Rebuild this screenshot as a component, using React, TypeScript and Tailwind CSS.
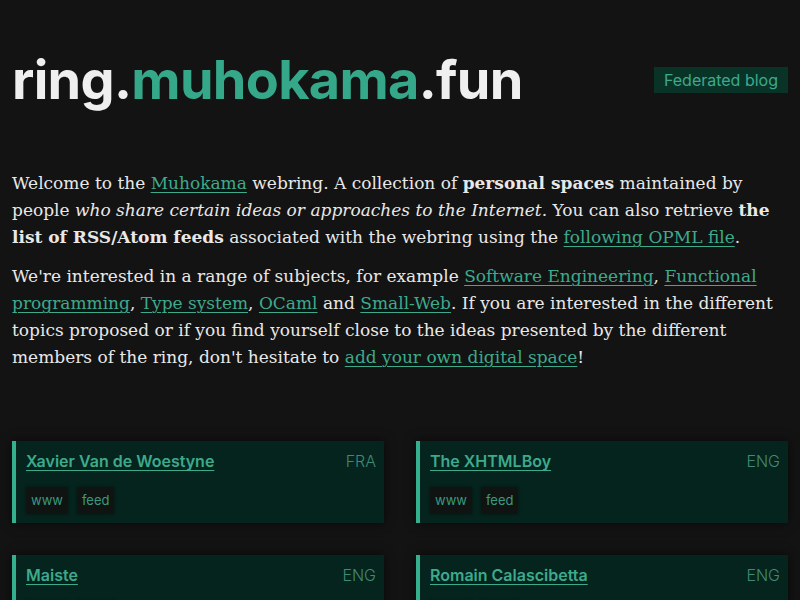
import React from "react";

const members = [
  { name: "Xavier Van de Woestyne", lang: "FRA", tags: ["www", "feed"] },
  { name: "The XHTMLBoy", lang: "ENG", tags: ["www", "feed"] },
  { name: "Maiste", lang: "ENG", tags: ["www", "feed"] },
  { name: "Romain Calascibetta", lang: "ENG", tags: ["www", "feed"] },
];

function L({ children }: { children: React.ReactNode }) {
  return <a className="text-[#3daa8c] underline underline-offset-[3px] decoration-1">{children}</a>;
}

export default function App() {
  return (
    <div className="min-h-[600px] bg-[#131313] text-[#e8e8e8] px-3 pb-10">
      <header className="flex items-center justify-between pt-[48px] h-[112px]">
        <h1 className="text-[54px] leading-none font-bold tracking-[-0.7px] text-[#efefef] font-['Inter',sans-serif]">
          ring.<span className="text-[#35a88a]">muhokama</span>.fun
        </h1>
        <span className="bg-[#0a3328] text-[#3daa8c] px-[10px] h-[26px] flex items-center text-[16px] font-['Inter',sans-serif]">
          Federated blog
        </span>
      </header>
      <main className="mt-[58px] font-['DejaVu_Serif',serif] text-[17px] leading-[27px]">
        <p>
          Welcome to the <L>Muhokama</L> webring. A collection of <b>personal spaces</b> maintained by people{" "}
          <i>who share certain ideas or approaches to the Internet</i>. You can also retrieve{" "}
          <b>the list of RSS/Atom feeds</b> associated with the webring using the <L>following OPML file</L>.
        </p>
        <p className="mt-3">
          We're interested in a range of subjects, for example <L>Software Engineering</L>,{" "}
          <L>Functional programming</L>, <L>Type system</L>, <L>OCaml</L> and <L>Small-Web</L>. If you are
          interested in the different topics proposed or if you find yourself close to the ideas presented by the
          different members of the ring, don't hesitate to <L>add your own digital space</L>!
        </p>
      </main>
      <section className="mt-[70px] grid grid-cols-2 gap-x-8 gap-y-8 font-['Inter',sans-serif]">
        {members.map((m) => (
          <div
            key={m.name}
            className="bg-[#05241d] border-l-4 border-[#35b08f] pl-[10px] pr-[8px] pt-[8px] pb-[8px] shadow-[0_0_10px_rgba(0,0,0,0.6)] h-[82px]"
          >
            <div className="flex items-center justify-between">
              <a className="text-[16px] font-semibold text-[#3daa8c] underline underline-offset-[3px]">{m.name}</a>
              <span className="text-[16px] font-light text-[#3f8a75]">{m.lang}</span>
            </div>
            <div className="flex gap-[9px] mt-[14px]">
              {m.tags.map((t) => (
                <span key={t} className="bg-[#0f1311] text-[#3a9a80] text-[13px] px-[5px] h-[27px] flex items-center shadow-[0_0_3px_rgba(0,0,0,0.5)]">
                  {t}
                </span>
              ))}
            </div>
          </div>
        ))}
      </section>
    </div>
  );
}
